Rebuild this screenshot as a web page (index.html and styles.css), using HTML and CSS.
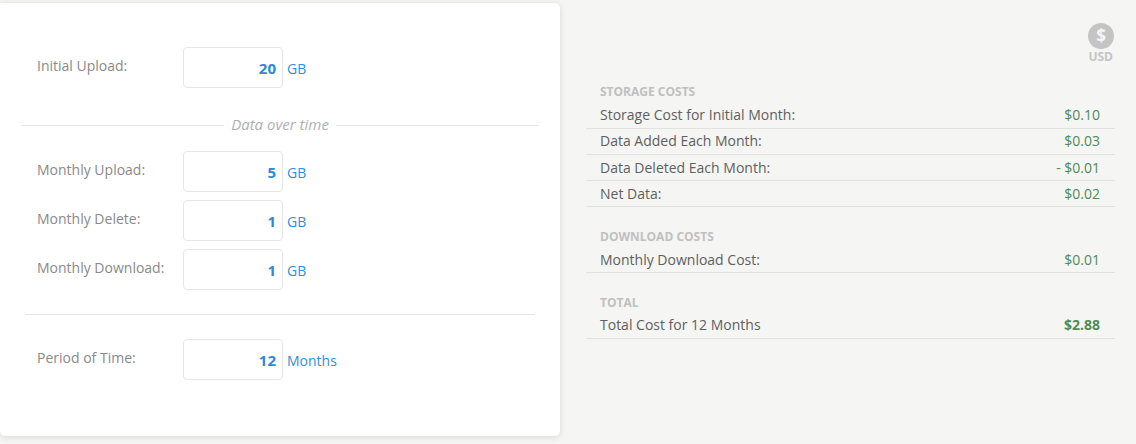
FILE: index.html
```html
<!DOCTYPE html>
<html lang="en">
<head>
<meta charset="utf-8">
<title>Cost calculator</title>
<link rel="stylesheet" href="styles.css">
</head>
<body>
<main class="page">
  <section class="card">
    <div class="field">
      <label class="field-label">Initial Upload:</label>
      <div class="input">20</div>
      <span class="unit">GB</span>
    </div>
    <div class="legend"><span class="legend-text">Data over time</span></div>
    <div class="field-group">
      <div class="field">
        <label class="field-label">Monthly Upload:</label>
        <div class="input">5</div>
        <span class="unit">GB</span>
      </div>
      <div class="field">
        <label class="field-label">Monthly Delete:</label>
        <div class="input">1</div>
        <span class="unit">GB</span>
      </div>
      <div class="field">
        <label class="field-label">Monthly Download:</label>
        <div class="input">1</div>
        <span class="unit">GB</span>
      </div>
    </div>
    <hr class="rule">
    <div class="field">
      <label class="field-label">Period of Time:</label>
      <div class="input">12</div>
      <span class="unit">Months</span>
    </div>
  </section>
  <section class="summary">
    <div class="currency">
      <span class="coin">$</span>
      <span class="coin-label">USD</span>
    </div>
    <h3 class="heading heading-first">STORAGE COSTS</h3>
    <div class="line"><span>Storage Cost for Initial Month:</span><span class="amount">$0.10</span></div>
    <div class="line"><span>Data Added Each Month:</span><span class="amount">$0.03</span></div>
    <div class="line line-low"><span>Data Deleted Each Month:</span><span class="amount">- $0.01</span></div>
    <div class="line line-low"><span>Net Data:</span><span class="amount">$0.02</span></div>
    <h3 class="heading heading-gap">DOWNLOAD COSTS</h3>
    <div class="line line-low"><span>Monthly Download Cost:</span><span class="amount">$0.01</span></div>
    <h3 class="heading heading-gap">TOTAL</h3>
    <div class="line"><span>Total Cost for 12 Months</span><span class="amount amount-total">$2.88</span></div>
  </section>
</main>
</body>
</html>
```
FILE: styles.css
```css
* { box-sizing: border-box; }
html, body { margin: 0; height: 100%; }
body {
  background: #f5f5f3;
  font-family: "Open Sans", "Liberation Sans", sans-serif;
  font-size: 14px;
  overflow: hidden;
}
.page { display: flex; align-items: flex-start; padding-top: 3px; }
.card {
  width: 560px;
  height: 433px;
  flex: none;
  background: #fff;
  border-radius: 0 5px 5px 5px;
  box-shadow: 0 1px 6px rgba(0, 0, 0, 0.13);
  padding: 44px 0 0;
}
.field { display: flex; align-items: flex-start; padding-left: 37px; height: 41px; }
.field-group { display: flex; flex-direction: column; gap: 8px; }
.field-label { width: 146px; flex: none; color: #8a8a8a; line-height: 19px; padding-top: 9px; }
.input {
  width: 100px;
  height: 41px;
  flex: none;
  border: 1px solid #e6e6e6;
  border-radius: 4px;
  background: #fff;
  color: #2b8ad6;
  font-size: 15px;
  font-weight: 700;
  text-align: right;
  padding: 0 6px;
  line-height: 41px;
}
.unit { margin-left: 4px; color: #2f8fdb; line-height: 43px; }
.legend {
  display: flex;
  align-items: center;
  margin: 27px 21px 16px 21px;
  height: 20px;
  color: #b0b0b0;
  font-size: 15px;
  font-style: italic;
}
.legend::before, .legend::after { content: ""; flex: 1; height: 1px; background: #e6e6e6; }
.legend-text { padding: 0 7px 2px; line-height: 20px; }
.rule { height: 1px; border: 0; background: #e6e6e6; margin: 24px 25px; }
.summary { width: 529px; flex: none; margin-left: 26px; }
.currency {
  display: flex;
  flex-direction: column;
  align-items: flex-end;
  padding: 20px 1px 0 0;
  height: 80px;
}
.coin {
  width: 26px;
  height: 26px;
  border-radius: 50%;
  background: #c4c4c4;
  color: #f5f5f3;
  font-weight: 700;
  font-size: 17px;
  line-height: 26px;
  text-align: center;
}
.coin-label { color: #c4c4c4; font-weight: 700; font-size: 12px; line-height: 15px; margin-right: 1px; }
.heading {
  margin: 0 0 1px;
  padding-left: 14px;
  color: #c0c0c0;
  font-size: 12px;
  font-weight: 700;
  line-height: 18px;
}
.heading-first { margin-bottom: 2px; }
.heading-gap { margin-top: 21px; }
.line {
  display: flex;
  justify-content: space-between;
  height: 26px;
  padding: 2px 15px 0 14px;
  border-bottom: 1px solid #e2e2e0;
  color: #5f5f5f;
  line-height: 19px;
}
.line-low { padding-top: 3px; }
.amount { color: #4f8a57; }
.amount-total { font-weight: 700; }
```
